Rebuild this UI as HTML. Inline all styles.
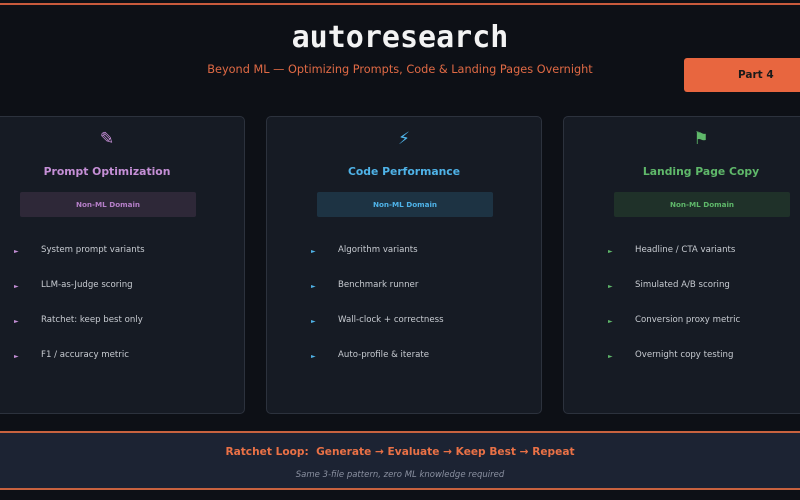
<!DOCTYPE html>
<html><head><meta charset="utf-8"><style>
*{margin:0;padding:0;box-sizing:border-box}
body{width:800px;height:500px;background:#0d1016;position:relative;overflow:hidden;font-family:"DejaVu Sans","Liberation Sans",sans-serif}
.topline{position:absolute;left:0;top:3px;width:800px;height:2px;background:#c85a3c}
h1{position:absolute;left:0;width:800px;top:20px;text-align:center;font-family:"DejaVu Sans Mono",monospace;font-weight:bold;font-size:30px;color:#f3f3f3}
.sub{position:absolute;left:0;width:800px;top:63px;text-align:center;font-size:11.3px;color:#e06a45}
.part{position:absolute;left:684px;top:58px;width:130px;height:34px;background:#e8663f;border-radius:3px;color:#1a1a1a;font-weight:bold;font-size:10.5px;line-height:34px;padding-left:54px}
.card{position:absolute;top:116px;width:276px;height:298px;background:#161b24;border:1px solid #2c323d;border-radius:5px}
.icon{position:absolute;top:12px;width:100%;text-align:center;font-size:17px}
.title{position:absolute;top:48px;width:100%;text-align:center;font-weight:bold;font-size:10.8px}
.badge{position:absolute;top:75px;left:50px;width:176px;height:25px;border-radius:2px;text-align:center;line-height:25px;font-size:7.2px;font-weight:bold}
.item{position:absolute;left:71px;font-size:8.6px;color:#c8ccd2}
.b{position:absolute;left:44px;font-size:6px}
.band{position:absolute;left:0;top:431px;width:800px;height:59px;background:#1c2333;border-top:2px solid #c8623f;border-bottom:2px solid #c8623f}
.band .l1{position:absolute;top:13px;width:100%;text-align:center;color:#ea7146;font-weight:bold;font-size:10.6px}
.band .l2{position:absolute;top:37px;width:100%;text-align:center;color:#8a90a0;font-style:italic;font-size:8.5px}
</style></head><body>
<div class="topline"></div>
<h1>autoresearch</h1>
<div class="sub">Beyond ML — Optimizing Prompts, Code &amp; Landing Pages Overnight</div>
<div class="part">Part 4</div>

<div class="card" style="left:-31px">
<div class="icon" style="color:#c58fd6">✎</div>
<div class="title" style="color:#c58fd6">Prompt Optimization</div>
<div class="badge" style="background:#2e2838;color:#b57fc8">Non-ML Domain</div>
<div class="b" style="top:131px;color:#c58fd6">►</div><div class="item" style="top:128px">System prompt variants</div>
<div class="b" style="top:166px;color:#c58fd6">►</div><div class="item" style="top:163px">LLM-as-Judge scoring</div>
<div class="b" style="top:201px;color:#c58fd6">►</div><div class="item" style="top:198px">Ratchet: keep best only</div>
<div class="b" style="top:236px;color:#c58fd6">►</div><div class="item" style="top:233px">F1 / accuracy metric</div>
</div>

<div class="card" style="left:266px">
<div class="icon" style="color:#4fb3e8">⚡</div>
<div class="title" style="color:#4fb3e8">Code Performance</div>
<div class="badge" style="background:#1d3343;color:#4fb3e8">Non-ML Domain</div>
<div class="b" style="top:131px;color:#4fb3e8">►</div><div class="item" style="top:128px">Algorithm variants</div>
<div class="b" style="top:166px;color:#4fb3e8">►</div><div class="item" style="top:163px">Benchmark runner</div>
<div class="b" style="top:201px;color:#4fb3e8">►</div><div class="item" style="top:198px">Wall-clock + correctness</div>
<div class="b" style="top:236px;color:#4fb3e8">►</div><div class="item" style="top:233px">Auto-profile &amp; iterate</div>
</div>

<div class="card" style="left:563px">
<div class="icon" style="color:#5fb86a">⚑</div>
<div class="title" style="color:#5fb86a">Landing Page Copy</div>
<div class="badge" style="background:#1f3129;color:#5fb86a">Non-ML Domain</div>
<div class="b" style="top:131px;color:#5fb86a">►</div><div class="item" style="top:128px">Headline / CTA variants</div>
<div class="b" style="top:166px;color:#5fb86a">►</div><div class="item" style="top:163px">Simulated A/B scoring</div>
<div class="b" style="top:201px;color:#5fb86a">►</div><div class="item" style="top:198px">Conversion proxy metric</div>
<div class="b" style="top:236px;color:#5fb86a">►</div><div class="item" style="top:233px">Overnight copy testing</div>
</div>

<div class="band">
<div class="l1">Ratchet Loop:&nbsp; Generate → Evaluate → Keep Best → Repeat</div>
<div class="l2">Same 3-file pattern, zero ML knowledge required</div>
</div>
</body></html>
